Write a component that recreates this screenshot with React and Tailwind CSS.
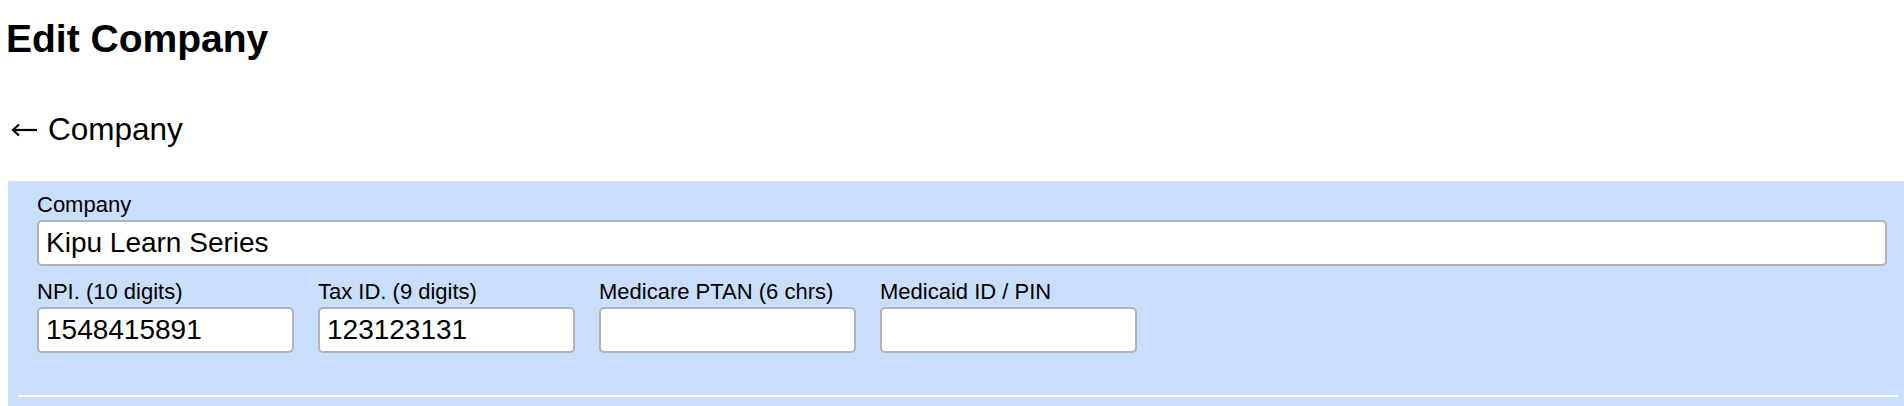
import React, { useState } from 'react';

const Field = ({ label, value, onChange, className = '' }) => (
    <label className={`flex flex-col ${className}`}>
        <span className="text-[22px] leading-[25px] text-black">{label}</span>
        <input
            type="text"
            value={value}
            onChange={(e) => onChange(e.target.value)}
            className="mt-[3px] h-[46px] w-full rounded-[5px] border-2 border-[#b2b2b2] bg-white px-[7px] text-[28px] text-black outline-none"
        />
    </label>
);

const ArrowLeft = () => (
    <svg width="26" height="14" viewBox="0 0 26 14" fill="none" stroke="currentColor" strokeWidth="2.2" strokeLinecap="butt">
        <path d="M2 7H26" />
        <path d="M8 1.5L2 7L8 12.5" />
    </svg>
);

const App = () => {
    const [company, setCompany] = useState('Kipu Learn Series');
    const [npi, setNpi] = useState('1548415891');
    const [taxId, setTaxId] = useState('123123131');
    const [ptan, setPtan] = useState('');
    const [medicaid, setMedicaid] = useState('');

    return (
        <div className="min-h-screen overflow-hidden bg-white font-['Liberation_Sans',Arial,sans-serif] text-black">
            <h1 className="pl-[6px] pt-[16px] text-[39px] font-bold leading-[45px]">Edit Company</h1>

            <a href="#" className="mt-[50px] flex items-center pl-[11px] text-[31.5px] leading-[36px] text-black">
                <span className="mr-[11px] mt-[2px]">
                    <ArrowLeft />
                </span>
                <span>Company</span>
            </a>

            <div className="ml-[8px] mt-[34px] bg-[#c9defa] pt-[11px] pb-[20px]">
                <div className="pl-[29px] pr-[17px]">
                    <Field label="Company" value={company} onChange={setCompany} />

                    <div className="mt-[13px] flex gap-[24px]">
                        <Field label="NPI. (10 digits)" value={npi} onChange={setNpi} className="w-[257px]" />
                        <Field label="Tax ID. (9 digits)" value={taxId} onChange={setTaxId} className="w-[257px]" />
                        <Field label="Medicare PTAN (6 chrs)" value={ptan} onChange={setPtan} className="w-[257px]" />
                        <Field label="Medicaid ID / PIN" value={medicaid} onChange={setMedicaid} className="w-[257px]" />
                    </div>
                </div>

                <hr className="ml-[10px] mr-[6px] mt-[42px] border-0 border-t-2 border-white" />
            </div>
        </div>
    );
};

export default App;
